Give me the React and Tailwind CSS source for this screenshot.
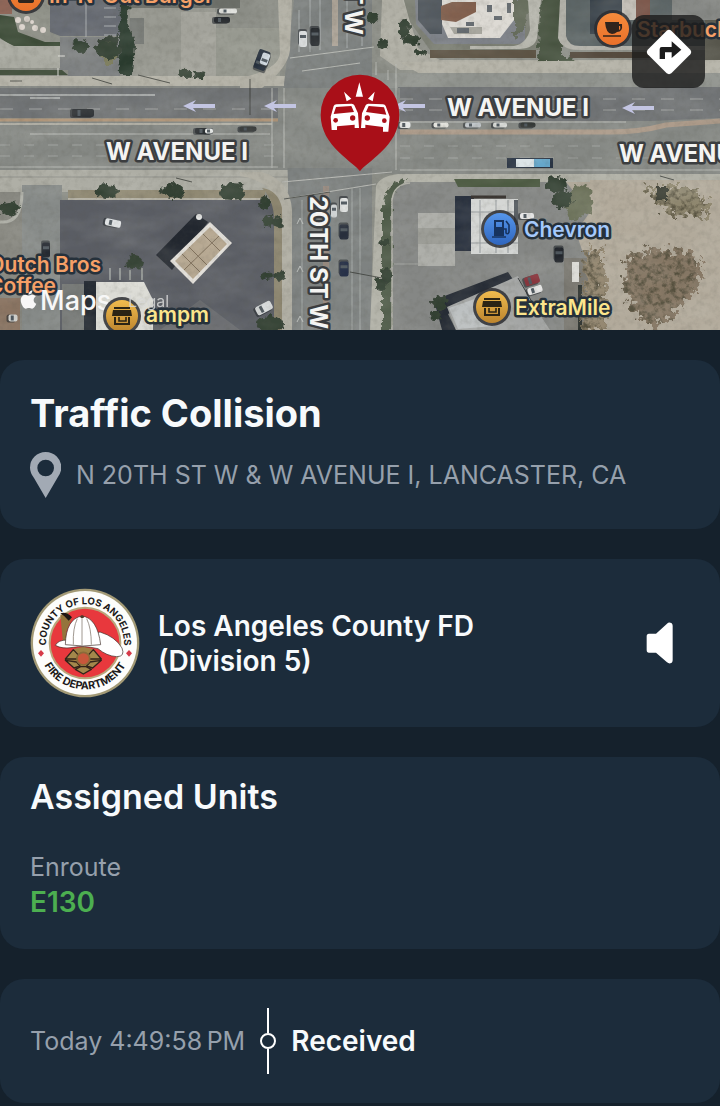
import React from "react";
import { FaApple } from "react-icons/fa";

const ARROWS = [[183, 106], [264, 106], [393, 106], [622, 108]];

const BUSHES = [
  [106, 191, 11, 7], [173, 191, 12, 8], [232, 192, 13, 8], [9, 208, 10, 7], [265, 202, 6, 6],
  [270, 222, 6, 5], [278, 222, 5, 5], [267, 275, 6, 5], [279, 276, 6, 5], [270, 325, 13, 9],
  [384, 243, 5, 4], [381, 283, 6, 6], [387, 275, 5, 8], [134, 262, 9, 7], [185, 74, 7, 4],
  [199, 75, 5, 3], [80, 46, 9, 6], [108, 50, 12, 9], [372, 18, 6, 5], [383, 44, 6, 5],
  [404, 28, 6, 9], [412, 40, 8, 6], [196, 318, 6, 5], [440, 302, 8, 7], [556, 184, 11, 8],
  [563, 199, 10, 9], [435, 315, 6, 5], [420, 53, 6, 3],
];

/* x, y, length, width, angle, colour */
const CARS = [
  [83, 113, 22, 8, 0, "#2b2f33"], [204, 131, 18, 6, 0, "#24282c"], [209, 131, 8, 5, 0, "#e8ebea"],
  [303, 39, 16, 8, 90, "#d9dcdd"], [315, 37, 18, 9, 90, "#1f2328"], [344, 205, 14, 8, 90, "#e1e3e2"],
  [334, 211, 13, 6, 90, "#ced2d3"], [344, 232, 15, 9, 90, "#252c3a"], [344, 269, 15, 9, 90, "#222c45"],
  [405, 125, 11, 6, 0, "#e6e8e7"], [441, 125, 15, 5, 0, "#e3e3dd"], [473, 125, 16, 5, 0, "#bfc5c9"],
  [500, 125, 14, 5, 0, "#d8dad7"], [528, 125, 15, 5, 0, "#343836"], [113, 223, 16, 7, 12, "#dfe2e4"],
  [46, 250, 15, 8, 90, "#22272f"], [264, 308, 17, 9, -28, "#d9dcdd"], [262, 60, 20, 12, -70, "#202a38"],
  [265, 59, 12, 8, -70, "#cfd8e0"], [532, 280, 15, 9, -18, "#873139"], [535, 290, 15, 7, -18, "#e6e6e5"],
  [559, 255, 15, 9, 90, "#22262c"], [228, 11, 18, 5, 0, "#e1e2de"], [222, 20, 16, 6, 0, "#22262a"],
  [527, 216, 14, 6, 0, "#e6e6e6"], [13, 318, 9, 7, 0, "#d3d3cf"], [248, 129, 17, 5, 0, "#3a3d3d"],
];

function Shop() {
  return (
    <g fill="#2b2415">
      <path d="M-8-9H8V-7H-8ZM-9-6H9L10 0H-10Z" />
      <path d="M-7 1V8H7V1" fill="none" stroke="#2b2415" strokeWidth="2" />
      <path d="M-3 1V5H4V1" fill="none" stroke="#2b2415" strokeWidth="1.6" />
    </g>
  );
}

function Poi({ x, y, fill, children }) {
  return (
    <g transform={`translate(${x} ${y})`}>
      <circle r="19" fill="#2b2d31" opacity="0.85" />
      <circle r="16" fill={fill} />
      {children}
    </g>
  );
}

function SatelliteMap() {
  return (
    <svg
      className="block h-full w-full"
      viewBox="0 0 720 330"
      preserveAspectRatio="xMidYMid slice"
      role="img"
      aria-label="Satellite map"
      fontFamily="Inter, 'Liberation Sans', sans-serif"
    >
      <defs>
        <filter id="grain" x="0" y="0" width="100%" height="100%">
          <feTurbulence type="fractalNoise" baseFrequency="0.16" numOctaves="3" seed="4" />
          <feColorMatrix values="0 0 0 0 0.1  0 0 0 0 0.1  0 0 0 0 0.08  1.6 0 0 0 -0.68" />
        </filter>
        <filter id="glow" x="0" y="0" width="100%" height="100%">
          <feTurbulence type="fractalNoise" baseFrequency="0.02 0.05" numOctaves="3" seed="9" />
          <feColorMatrix values="0 0 0 0 0.8  0 0 0 0 0.8  0 0 0 0 0.74  1.2 0 0 0 -0.4" />
        </filter>
        <filter id="rough" x="-20%" y="-20%" width="140%" height="140%">
          <feTurbulence type="fractalNoise" baseFrequency="0.16" numOctaves="3" seed="2" result="n" />
          <feDisplacementMap in="SourceGraphic" in2="n" scale="9" xChannelSelector="R" yChannelSelector="G" />
        </filter>
        <filter id="scrub" x="-10%" y="-10%" width="120%" height="120%" colorInterpolationFilters="sRGB">
          <feTurbulence type="fractalNoise" baseFrequency="0.17" numOctaves="4" seed="7" result="n" />
          <feDisplacementMap in="SourceGraphic" in2="n" scale="26" xChannelSelector="R" yChannelSelector="G" result="d" />
          <feColorMatrix in="n" values="0 0 0 0 0.33  0 0 0 0 0.31  0 0 0 0 0.24  3 0 0 0 -1.3" result="c" />
          <feComposite in="c" in2="d" operator="in" result="e" />
          <feMerge><feMergeNode in="d" /><feMergeNode in="e" /></feMerge>
        </filter>
        <linearGradient id="gold" x2="0" y2="1"><stop stopColor="#f0bb4e" /><stop offset="1" stopColor="#bd852e" /></linearGradient>
        <linearGradient id="blue" x2="0" y2="1"><stop stopColor="#5696ea" /><stop offset="1" stopColor="#2f66bf" /></linearGradient>
        <linearGradient id="orange" x2="0" y2="1"><stop stopColor="#f58b3c" /><stop offset="1" stopColor="#e9702a" /></linearGradient>
      </defs>

      <rect width="720" height="330" fill="#8b8d86" />

      {/* north-west lots */}
      <path d="M0 0H50V80H0Z" fill="#8e9087" />
      <path d="M0 0H12V14H0Z" fill="#8f6658" />
      <path d="M0 15L14 17L18 32L45 42H60V46H12L0 38Z" fill="#3c4b37" />
      <path d="M0 39L14 46H60V68H0Z" fill="#a9aaa1" />
      <path d="M0 70H62L68 75H0Z" fill="#45523f" />
      <path d="M50 0H122V36H60L50 32Z" fill="#656971" />
      <path d="M60 37H120V80H68V70H60Z" fill="#7c7f80" />
      <path d="M86 0V37M104 8H116M104 17H116M104 26H116M104 35H116" stroke="#a8acae" strokeWidth="1" />
      <path d="M58 56H65M58 68V76" stroke="#e0e0da" />
      <path d="M130 0H215V77H130Z" fill="#96978f" />
      <path d="M130 18H144V44H128Z" fill="#777a76" />
      <path d="M181 12H216V76H181Z" fill="#a3a39b" />
      <path d="M216 28H280V77H216Z" fill="#96988f" />
      <path d="M128 0H240V8H128Z" fill="#6c6f69" />
      <path d="M120 0H130L128 24L135 46L133 75H120L119 44Z" fill="#2c3a2f" filter="url(#rough)" />
      <path d="M96 40L117 34L119 60L105 58Z" fill="#353f35" filter="url(#rough)" />
      <ellipse cx="109" cy="53" rx="8" ry="12" fill="#7c7c5b" filter="url(#rough)" />
      <g fill="#dcd4cd">
        <circle cx="18" cy="20" r="3" /><circle cx="27" cy="19" r="3" /><circle cx="22" cy="27" r="3" />
        <circle cx="35" cy="28" r="3" /><circle cx="43" cy="30" r="3" /><circle cx="32" cy="22" r="2" />
      </g>

      {/* north-east lots */}
      <path d="M382 0H720V80H405L380 60Z" fill="#8f918a" />
      <path d="M382 0H404L418 48L440 60H720V70H400L380 56Z" fill="#b0afa5" />
      <path d="M404 0H545V50H430L410 22Z" fill="#7b7e73" />
      <path d="M415 0H525V44H434L416 24Z" fill="#7c8087" />
      <path d="M418 0H442V34H430L418 20Z" fill="#4c535a" />
      <path d="M442 0H514V20L500 38H448L442 24Z" fill="#dddad4" />
      <path d="M441 6L452 2H476V12L456 22L441 20Z" fill="#82604e" />
      <path d="M450 27H482V34H454Z" fill="#a8a79f" />
      <g fill="#656b70"><path d="M457 28h12v5h-12zM466 22h8v4h-8zM487 5h5v7h-5zM494 16h8v4h-8zM507 3h4v10h-4z" /></g>
      <path d="M430 50H536V58H430Z" fill="#5b5142" />
      <path d="M514 0H532L525 28L514 40Z" fill="#626959" filter="url(#rough)" />
      <path d="M528 0H541L537 38Q535 48 520 49H470V46H514Q526 44 530 30Z" fill="#b6b6ad" />
      <path d="M541 0H562V55L580 62H537Z" fill="#46533f" filter="url(#rough)" />
      <path d="M560 0L558 38Q562 50 578 50H720V0Z" fill="#b2b1a9" />
      <path d="M566 0V36Q568 46 580 46H720V0Z" fill="#5c6566" />
      <path d="M590 0H622V34H590Z" fill="#39424a" />
      <path d="M622 0H636V20H622Z" fill="#c2bdb5" />
      <path d="M636 0H650V24H636Z" fill="#795347" />
      <path d="M570 52H650V58H570Z" fill="#554a3e" />
      <path d="M672 0H720V20H672Z" fill="#858784" />
      <path d="M705 20H720V62H705Z" fill="#57564c" />

      {/* avenue */}
      <path d="M0 76H290V90H0ZM400 62L720 60V74H420Z" fill="#b5b3a8" />
      <rect y="86" width="720" height="88" fill="#858884" />
      <path d="M370 73H720V88H370Z" fill="#90938e" />
      <path d="M0 88H290V118H0ZM398 87H720V118L650 121H398Z" fill="#707375" />
      <path d="M0 95H155M30 98H60" stroke="#b8bbb9" strokeWidth="2" opacity="0.75" />
      <path d="M0 109H280M400 99H720M400 110H720" stroke="#a0a3a2" strokeDasharray="13 16" />
      <path d="M0 120H278" stroke="#b09579" strokeWidth="3" />
      <path d="M0 124H272" stroke="#b0aea4" strokeWidth="2" />
      <path d="M398 132H610Q640 132 666 125L720 121" fill="none" stroke="#ab9988" strokeWidth="5" />
      <path d="M30 134H270M400 122H626" stroke="#b9bbb7" strokeWidth="1" />
      <path d="M0 145H280M0 156H280M400 146H600M400 158H720" stroke="#a0a3a0" strokeDasharray="10 14" />
      <path d="M0 167H290M400 170H720" stroke="#b3b5b0" />

      {/* south side */}
      <path d="M0 170H290V192H0Z" fill="#acaca3" />
      <path d="M0 177H290" stroke="#8f908a" />
      <path d="M68 190H265V198H68Z" fill="#8f8872" />
      <path d="M68 198H262V200H68Z" fill="#b4b1a5" />
      <path d="M0 192H22V330H0Z" fill="#86867f" />
      <path d="M22 185H62V330H22Z" fill="#868a88" />
      <path d="M60 200H265Q276 202 276 216V330H60Z" fill="#5a5d64" />
      <path d="M0 298H20V330H0Z" fill="#8a7462" />
      <path d="M62 284H84V330H62Z" fill="#747775" />
      <path d="M0 222Q22 224 22 192" fill="none" stroke="#b0b1a9" strokeWidth="3" />
      <path d="M200 300L240 330H160Z" fill="#777979" opacity="0.5" />

      {/* street */}
      <path d="M294 0H372V330H288V180L284 84Z" fill="#7d8180" />
      <path d="M278 88H400V168H278Z" fill="#868985" />
      <path d="M278 0H292L290 50Q288 68 262 88H240V78Q278 70 280 54Z" fill="#b2b0a5" />
      <path d="M332 0H338V46H332Z" fill="#aba296" />
      <path d="M299 10V52M310 0V52M320 0V50M347 0V48M362 0V46" stroke="#a9adad" />
      <path d="M290 58L374 47M302 71L360 63M284 88V168M272 88V168M388 70V80M396 64V170M376 62V75" fill="none" stroke="#b9bbb6" />
      <path d="M240 176Q270 180 280 205V330H292V210Q290 180 262 172H240Z" fill="#b0aea3" />
      <path d="M262 188Q274 200 274 220V330H282V208Q278 190 262 188Z" fill="#8c856f" />
      <path d="M323 186H329V330H323Z" fill="#95877d" />
      <path d="M302 200V330M352 188V330M360 188V330" stroke="#a3a7a5" />
      <path d="M282 182L392 172M284 199L376 184" stroke="#babbb6" />
      <path d="M376 186Q380 176 398 174H720V184H404Q390 188 388 204V330H370Z" fill="#b1b1a7" />
      <path d="M297 224L300 218L303 224M297 272L300 266L303 272M297 322L300 316L303 322" fill="none" stroke="#bfc2bf" />

      {/* south-east lots */}
      <path d="M392 200Q394 182 412 182H600V330H390Z" fill="#858785" />
      <path d="M386 194Q390 182 406 179L400 186L392 198V330H382V210Z" fill="#4e5a47" filter="url(#rough)" />
      <path d="M392 330V200Q394 184 410 183" fill="none" stroke="#b2b2a9" strokeWidth="1.5" />
      <path d="M454 179H540V187H458Z" fill="#4d5b43" />
      <path d="M418 213H455V266H418Z" fill="#acada8" />
      <path d="M418 228H455V244H418Z" fill="#9b9c96" />
      <path d="M392 264H418" stroke="#a5a7a3" />
      <path d="M455 196H474V251H455Z" fill="#252d3b" />
      <path d="M471 199H518V254H471Z" fill="#d4d6d4" />
      <path d="M480 200V253M496 200V253M508 200V253M471 212H518M471 243H518" stroke="#93989b" />
      <path d="M514 200H518V225H514Z" fill="#555b60" />
      <path d="M471 197H506" stroke="#332e2a" strokeWidth="3" />
      <path d="M434 300L508 272L516 284L448 314L456 330H442Z" fill="#262c35" />
      <path d="M447 307L518 276L534 306L550 330H456Z" fill="#a3a5a4" />
      <path d="M449 308L486 295L494 326L458 329Z" fill="#bcc0c1" />
      <path d="M518 278L532 302" stroke="#34383a" />
      <path d="M564 258H588V330H564Z" fill="#7a7871" />
      <path d="M572 262H579V282H572Z" fill="#dcdcd7" />
      <path d="M578 285H582V330H578Z" fill="#2e3330" />
      <path d="M590 180H720V330H588Z" fill="#b2aa9b" />
      <path d="M566 182H620V250H582L576 232L590 212Z" fill="#b2aa9b" />
      <path d="M574 184L590 188L592 214L570 220L564 204Z" fill="#6a7059" filter="url(#rough)" />
      <path d="M584 252L602 250L606 276L606 330H582Z" fill="#93866f" filter="url(#scrub)" />
      <path d="M642 186L688 186L712 206L702 217L674 216L660 204Z" fill="#8f876f" filter="url(#scrub)" />
      <path d="M626 260L648 248L690 252L702 264L694 292L670 318L650 328L632 308L624 284Z" fill="#877865" filter="url(#scrub)" />
      <path d="M656 187H667V200H656Z" fill="#34382f" filter="url(#rough)" />

      {/* west canopy and store */}
      <path d="M156 255L196 214L208 222L172 270Z" fill="#22272f" />
      <path d="M170 261L210 222L232 243L193 284Z" fill="#e3e0da" />
      <path d="M175 261L210 227L227 244L193 279Z" fill="#b5a68f" />
      <path d="M182 254L200 272M203 234L220 251M184 270L219 236M189 247L207 265" stroke="#7d6d58" />
      <circle cx="199" cy="217" r="3" fill="#e6e7e6" />
      <path d="M84 281H96V330H84Z" fill="#20262f" />
      <path d="M96 282H144L153 300V330H96Z" fill="#dcdcd6" />
      <path d="M110 268V280M120 268V280M130 270V280M142 268V280" stroke="#8f9392" strokeWidth="2" />

      <g fill="#333f33" filter="url(#rough)">
        {BUSHES.map(([x, y, rx, ry], i) => <ellipse key={i} cx={x} cy={y} rx={rx} ry={ry} />)}
      </g>
      {CARS.map(([x, y, w, h, a, c], i) => (
        <g key={i} transform={`translate(${x} ${y}) rotate(${a})`}>
          <rect x={-w / 2 - 2} y={-h / 2} width={w} height={h + 1} rx="2" fill="#20252a" opacity="0.6" />
          <rect x={-w / 2} y={-h / 2} width={w} height={h} rx="2" fill={c} />
          <rect x={-w / 4} y={1 - h / 2} width="3" height={h - 2} fill="#4d565d" />
        </g>
      ))}
      <path d="M507 158H553V168H507Z" fill="#283343" />
      <path d="M516 159H534V167H516Z" fill="#dce5e9" />
      <path d="M534 159H550V167H534Z" fill="#65a7cb" />
      <path d="M138 75L170 83M92 78L112 84M10 81H22M250 79V115M284 199L330 192M350 272L382 278M660 176L674 180M176 178L192 182" stroke="#30332f" opacity="0.75" />

      <rect width="720" height="330" filter="url(#glow)" opacity="0.2" />
      <rect width="720" height="330" filter="url(#grain)" opacity="0.22" />

      <g fill="#c3c5e2">
        {ARROWS.map(([x, y]) => (
          <path key={x} d={`M${x} ${y}l13-6l-3 4h22v4h-22l3 4z`} />
        ))}
      </g>

      <g fontWeight="700" fill="#f4f4f2" stroke="#3b3d3f" strokeWidth="5" strokeLinejoin="round" paintOrder="stroke" fontSize="24">
        <text x="106" y="160">W AVENUE I</text>
        <text x="447" y="116">W AVENUE I</text>
        <text x="619" y="162">W AVENUE I</text>
        <text transform="translate(310 196) rotate(90)">20TH ST W</text>
        <text transform="translate(345 35) rotate(90)" textAnchor="end">20TH ST W</text>
      </g>

      <Poi x={613} y={29} fill="url(#orange)">
        <path d="M-8-7H6V-5H9Q10 3 4 3Q2 5-1 5Q-7 5-8-7ZM6-3V1Q8 0 7-3Z" fill="#30241d" fillRule="evenodd" />
        <path d="M-10 7H8" stroke="#30241d" strokeWidth="1.5" />
      </Poi>
      <Poi x={26} y={-5} fill="url(#orange)"><path d="M-8 2H8V6Q8 8 5 8H-5Q-8 8-8 6Z" fill="#30241d" /></Poi>
      <Poi x={500} y={229} fill="url(#blue)">
        <path d="M-6-9H4V7H-6ZM-4-7V-2H2V-7Z" fill="#17335f" fillRule="evenodd" />
        <path d="M-8 8H6M4 0H6V4Q8 6 9 3V-4L6-8" fill="none" stroke="#17335f" strokeWidth="1.6" />
      </Poi>
      <Poi x={492} y={307} fill="url(#gold)"><Shop /></Poi>

      <g fontWeight="600" fontSize="21" stroke="#26313b" strokeWidth="5" strokeLinejoin="round" paintOrder="stroke">
        <text x="49" y="3" fill="#f5a067">In-N-Out Burger</text>
        <text x="637" y="37" fill="#f5a067">Starbucks</text>
        <text x="524" y="237" fill="#a5c9fb">Chevron</text>
        <text x="515" y="315" fill="#fbe58c">ExtraMile</text>
        <text x="101" y="272" fill="#f5a067" textAnchor="end">Dutch Bros</text>
        <text x="56" y="293" fill="#f5a067" textAnchor="end">Coffee</text>
      </g>

      <FaApple x="18" y="289" size="21" color="#f7f7f7" />
      <text x="40" y="310" fontSize="27" fontWeight="500" fill="#f7f7f7">Maps</text>
      <Poi x={122} y={316} fill="url(#gold)"><Shop /></Poi>
      <text x="146" y="322" fontWeight="600" fontSize="21" stroke="#26313b" strokeWidth="5" strokeLinejoin="round" paintOrder="stroke" fill="#fbe58c">ampm</text>
      <text x="128" y="307" fontSize="16" fill="#d7d8d7" opacity="0.85">Legal</text>

      {/* collision pin */}
      <svg x="240" y="0" width="240" height="172" viewBox="0 0 720 516">
        <path d="M360 514C346 488 242 440 242 344A118 120 0 0 1 478 344C478 440 374 488 360 514Z" fill="#a90f18" />
        <g fill="#fff">
          <path d="M358 247L369 290H347ZM312 275L334 296L320 304ZM404 275L398 304L384 296Z" />
          <path d="M281 318Q283 313 289 313L335 311Q341 311 343 316L354 340L357 384H344V374L291 379V390H275L272 350Z" />
          <path d="M437 318Q435 313 429 313L385 311Q379 311 377 316L366 340L363 384H376V374L429 381V395H445L449 350Z" />
        </g>
        <g fill="#a90f18">
          <path d="M288 321L334 318L342 336L281 342ZM432 322L386 318L378 336L439 344Z" />
          <circle cx="287" cy="361" r="7" /><circle cx="338" cy="354" r="8" />
          <circle cx="382" cy="354" r="8" /><circle cx="433" cy="362" r="7" />
        </g>
      </svg>
    </svg>
  );
}

function DepartmentSeal() {
  return (
    <svg className="size-[110px] shrink-0" viewBox="0 0 330 330" role="img" aria-label="County of Los Angeles Fire Department">
      <defs>
        <path id="arcTop" d="M63 223A117 117 0 1 1 267 223" />
        <path id="arcBottom" d="M26 165A139 139 0 0 0 304 165" />
      </defs>
      <circle cx="165" cy="165" r="163" fill="#a39a76" />
      <circle cx="165" cy="165" r="156" fill="#fdfdfb" />
      <circle cx="165" cy="165" r="109" fill="#b9a77c" />
      <circle cx="165" cy="165" r="103" fill="#e8383d" />
      <g fontFamily="Inter, 'Liberation Sans', sans-serif" fontWeight="700" fill="#1c1a1a" textAnchor="middle">
        <text fontSize="29"><textPath href="#arcTop" startOffset="50%">COUNTY OF LOS ANGELES</textPath></text>
        <text fontSize="32"><textPath href="#arcBottom" startOffset="50%">FIRE DEPARTMENT</textPath></text>
      </g>
      <path d="M33 186l9 10l-9 10l-9-10zM297 186l9 10l-9 10l-9-10z" fill="#d63a48" />
      <path d="M91 80L114 74L124 94L110 128L107 164H99Z" fill="#94743c" />
      <path d="M91 76Q110 70 126 88L116 98Q105 84 91 76Z" fill="#1e1715" />
      <path d="M103 213L132 183L160 176L188 183L217 213L186 240L160 260L134 240Z" fill="#a08043" />
      <g fill="#a3874b" stroke="#33231a" strokeWidth="4" strokeLinejoin="round">
        <path d="M130 185L146 202L140 213H106ZM190 185L174 202L180 213H214ZM106 217L140 222L150 234L132 240ZM214 217L180 222L170 234L188 240Z" />
        <path d="M136 244L152 236H168L184 244L160 258Z" />
      </g>
      <circle cx="160" cy="212" r="19" fill="#c8573b" stroke="#8b6a39" strokeWidth="5" />
      <path d="M76 172Q84 156 112 156L210 132Q256 146 276 180Q286 206 260 206Q230 204 204 182Q160 172 130 178Q96 184 76 172Z" fill="#fff" stroke="#3c2c25" strokeWidth="2" />
      <path d="M106 170Q108 92 156 84Q202 90 212 170Q160 178 106 170Z" fill="#fff" stroke="#3c2c25" strokeWidth="2" />
      <path d="M156 88V172M142 92Q128 120 130 170M170 92Q184 120 184 170" fill="none" stroke="#a09890" strokeWidth="3" />
      <path d="M150 86Q156 78 163 86L160 90H153Z" fill="#4e3929" />
    </svg>
  );
}

function Card({ children, className }) {
  return <section className={`rounded-3xl bg-[#1c2c3b] px-[30px] ${className}`}>{children}</section>;
}

export default function App() {
  return (
    <main className="min-h-screen bg-[#15212c] font-[Inter,'Liberation_Sans',sans-serif] text-[#f7fafc]">
      <div className="relative h-[330px] overflow-hidden">
        <SatelliteMap />
        <button type="button" aria-label="Directions" className="absolute top-[15px] right-[15px] flex size-[73px] items-center justify-center rounded-xl bg-[#1b1b1b]/80">
          <svg className="size-[46px]" viewBox="0 0 138 138">
            <path d="M62 5Q69-1 76 5L133 62Q138 69 133 76L76 133Q69 138 62 133L5 76Q0 69 5 62Z" fill="#fff" />
            <path d="M41 90V60Q41 54 47 54H77V37L106 62L77 87V70H57V90Z" fill="#1c1c1c" />
          </svg>
        </button>
      </div>

      <div className="flex flex-col gap-[30px] pt-[30px]">
        <Card className="pt-[29px] pb-[30px]">
          <h1 className="text-[38px] leading-[48px] font-bold">Traffic Collision</h1>
          <div className="mt-[14px] flex items-center gap-[15px]">
            <svg className="h-12 w-[31px] shrink-0" viewBox="0 0 93 144" aria-hidden="true">
              <path fillRule="evenodd" fill="#a2aab4" d="M47 141L12 81Q0 65 0 50A47 47 0 0 1 94 50Q94 65 82 81ZM47 26A25 25 0 1 0 47 76A25 25 0 1 0 47 26Z" />
            </svg>
            <p className="text-[25px] leading-8 text-[#96a0ac]">N 20TH ST W &amp; W AVENUE I, LANCASTER, CA</p>
          </div>
        </Card>

        <Card className="flex items-center gap-[18px] py-[29px]">
          <DepartmentSeal />
          <h2 className="flex-1 pt-[2px] text-[28px] leading-[35px] font-semibold">Los Angeles County FD<br />(Division 5)</h2>
          <button type="button" aria-label="Play dispatch audio" className="mr-4 shrink-0">
            <svg className="h-[42px] w-[28px]" viewBox="0 0 84 126">
              <path d="M9 35H30L63 5Q68 0 73 2Q80 3 80 12V114Q80 123 73 124Q68 125 63 121L30 92H9Q2 92 2 84V43Q2 35 9 35Z" fill="#fff" />
            </svg>
          </button>
        </Card>

        <Card className="pt-[18px] pb-[29px]">
          <h2 className="text-[34px] leading-[44px] font-semibold">Assigned Units</h2>
          <p className="mt-8 text-[25px] leading-[33px] text-[#96a0ac]">Enroute</p>
          <p className="text-[28px] leading-9 font-semibold text-[#4caf50]">E130</p>
        </Card>

        <Card className="flex items-center gap-[15px] py-[29px]">
          <time className="text-[25px] leading-8 text-[#96a0ac]">Today 4:49:58{"\u2009"}PM</time>
          <svg className="h-[66px] w-4 shrink-0" viewBox="0 0 16 66" aria-hidden="true">
            <path d="M8 0V25M8 41V66" stroke="#fff" strokeWidth="2" />
            <circle cx="8" cy="33" r="7" fill="none" stroke="#fff" strokeWidth="2" />
          </svg>
          <p className="text-[28px] leading-9 font-semibold">Received</p>
        </Card>
      </div>
    </main>
  );
}
